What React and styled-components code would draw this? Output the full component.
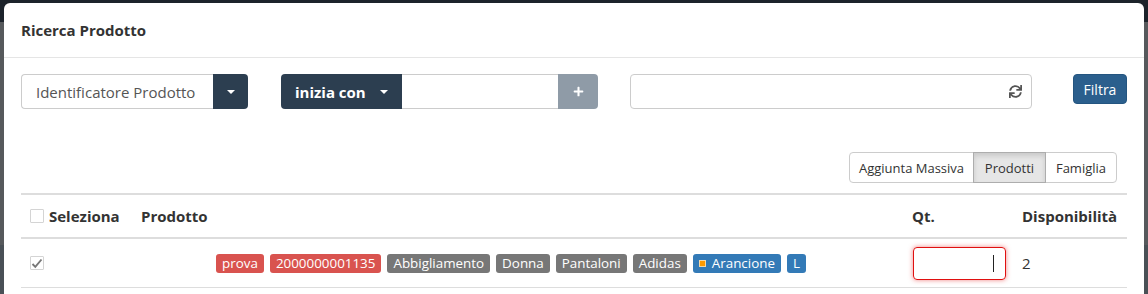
import React from "react";
import styled, { createGlobalStyle } from "styled-components";
import { FaSync, FaPlus } from "react-icons/fa";

const GlobalStyle = createGlobalStyle`
  html, body {
    margin: 0;
    padding: 0;
    background: #4f5458;
  }
  * {
    box-sizing: border-box;
  }
`;

const Screen = styled.div`
  width: 1148px;
  height: 294px;
  overflow: hidden;
  padding: 3px 4px 0 4px;
  background: linear-gradient(
    to bottom,
    #1c232b 0,
    #1c232b 22px,
    #56595c 22px,
    #56595c 245px,
    #495056 245px
  );
  font-family: "Open Sans", "Liberation Sans", sans-serif;
  color: #333;
`;

const Modal = styled.div`
  background: #fff;
  border-radius: 6px 6px 0 0;
  height: 291px;
`;

const Header = styled.div`
  height: 55px;
  padding: 0 17px;
  display: flex;
  align-items: center;
  border-bottom: 1px solid #e5e5e5;
`;

const Title = styled.h4`
  margin: 0;
  font-size: 15px;
  font-weight: 700;
  color: #333;
`;

const Body = styled.div`
  padding: 16px 17px 0 17px;
`;

const FilterRow = styled.div`
  display: flex;
  align-items: flex-start;
  height: 35px;
`;

const Group = styled.div`
  display: flex;
  height: 35px;
  margin-left: ${p => p.$offset || 0}px;
`;

const SelectBox = styled.div`
  width: ${p => p.$width}px;
  height: 35px;
  display: flex;
  align-items: center;
  padding-left: 14px;
  border: 1px solid #ccc;
  border-right: none;
  border-radius: 4px 0 0 4px;
  font-size: 15px;
  color: #555;
`;

const DarkButton = styled.div`
  width: ${p => p.$width}px;
  height: 35px;
  display: flex;
  align-items: center;
  justify-content: ${p => (p.$label ? "flex-start" : "center")};
  padding-left: ${p => (p.$label ? 14 : 0)}px;
  gap: 14px;
  background: #2c3e50;
  color: #fff;
  font-size: 15px;
  font-weight: 700;
  border-radius: ${p => p.$radius};
`;

const Caret = styled.span`
  width: 0;
  height: 0;
  border-left: 4px solid transparent;
  border-right: 4px solid transparent;
  border-top: 4px solid #fff;
`;

const TextInput = styled.div`
  width: ${p => p.$width}px;
  height: 35px;
  border: 1px solid #ccc;
  border-left: ${p => (p.$joined ? "none" : "1px solid #ccc")};
  border-right: ${p => (p.$joined ? "none" : "1px solid #ccc")};
  border-radius: ${p => (p.$joined ? "0" : "4px")};
  display: flex;
  align-items: center;
  justify-content: flex-end;
  padding-right: 9px;
  color: #555;
`;

const AddButton = styled.div`
  width: 40px;
  height: 35px;
  background: #8f9ba7;
  color: #fff;
  display: flex;
  align-items: center;
  justify-content: center;
  border-radius: 0 4px 4px 0;
`;

const FilterButton = styled.button`
  margin-left: auto;
  width: 54px;
  height: 30px;
  border: 1px solid #245580;
  border-radius: 4px;
  background: #2b5f8d;
  color: #fff;
  font-family: inherit;
  font-size: 14px;
  padding: 0;
`;

const ToggleRow = styled.div`
  display: flex;
  justify-content: flex-end;
  padding-right: 10px;
  margin-top: 43px;
`;

const ToggleButton = styled.div`
  height: 31px;
  width: ${p => p.$width}px;
  display: flex;
  align-items: center;
  justify-content: center;
  font-size: 13px;
  color: #333;
  border: 1px solid #ccc;
  margin-left: -1px;
  background: ${p => (p.$active ? "#e6e6e6" : "#fff")};
  border-color: ${p => (p.$active ? "#adadad" : "#ccc")};
  box-shadow: ${p => (p.$active ? "inset 0 3px 5px rgba(0,0,0,.125)" : "none")};
  position: relative;
  z-index: ${p => (p.$active ? 1 : 0)};

  &:first-child {
    border-radius: 4px 0 0 4px;
    margin-left: 0;
  }
  &:last-child {
    border-radius: 0 4px 4px 0;
  }
`;

const Table = styled.div`
  margin-top: 10px;
`;

const Row = styled.div`
  display: grid;
  grid-template-columns: 112px 1fr 110px 113px;
  align-items: center;
  height: ${p => (p.$head ? 46 : 49)}px;
  border-top: ${p => (p.$head ? "2px solid #ddd" : "none")};
  border-bottom: ${p => (p.$head ? "2px" : "1px")} solid #ddd;
`;

const HeadCell = styled.div`
  padding: 0 8px;
  font-size: 15px;
  font-weight: 700;
  color: #333;
  display: flex;
  align-items: center;
  gap: 5px;
  padding-left: ${p => p.$left || 8}px;
  white-space: nowrap;
`;

const Cell = styled.div`
  padding: 0 8px;
  padding-left: ${p => p.$left || 8}px;
  font-size: 15px;
  color: #333;
  display: flex;
  align-items: center;
  justify-content: ${p => (p.$center ? "center" : "flex-start")};
  padding-right: ${p => (p.$center ? 23 : 8)}px;
`;

const CheckBox = styled.span`
  width: 14px;
  height: 14px;
  border: 1px solid #d4d4d4;
  border-radius: 1px;
  display: inline-flex;
  align-items: center;
  justify-content: center;
  background: #fff;
`;

const Labels = styled.div`
  display: flex;
  gap: 6px;
`;

const colors = {
  danger: "#d9534f",
  default: "#777",
  primary: "#337ab7",
};

const Label = styled.span`
  height: 19px;
  line-height: 19px;
  padding: 0 6px;
  border-radius: 3px;
  background: ${p => colors[p.$kind]};
  color: #fff;
  font-size: 13.4px;
  display: inline-flex;
  align-items: center;
  gap: 6px;
`;

const Swatch = styled.span`
  width: 7px;
  height: 7px;
  background: #ff9a00;
  border: 1px solid #f5d9a8;
`;

const QtyInput = styled.div`
  width: 93px;
  height: 33px;
  margin-left: 1px;
  border: 1px solid #e01010;
  border-radius: 4px;
  box-shadow: 0 0 5px rgba(230, 30, 30, 0.55);
  display: flex;
  align-items: center;
  justify-content: flex-end;
  padding-right: 11px;
`;

const TextCaret = styled.span`
  width: 1px;
  height: 17px;
  background: #222;
`;

const tags = [
  { text: "prova", kind: "danger" },
  { text: "2000000001135", kind: "danger" },
  { text: "Abbigliamento", kind: "default" },
  { text: "Donna", kind: "default" },
  { text: "Pantaloni", kind: "default" },
  { text: "Adidas", kind: "default" },
  { text: "Arancione", kind: "primary", swatch: true },
  { text: "L", kind: "primary" },
];

const Check = () => (
  <svg width="12" height="11" viewBox="0 0 12 11">
    <path d="M1.5 6 L4.3 8.8 L10.5 1.5" fill="none" stroke="#777" strokeWidth="1.9" />
  </svg>
);

export default function App() {
  return (
    <>
      <GlobalStyle />
      <Screen>
        <Modal>
          <Header>
            <Title>Ricerca Prodotto</Title>
          </Header>
          <Body>
            <FilterRow>
              <Group>
                <SelectBox $width={192}>Identificatore Prodotto</SelectBox>
                <DarkButton $width={35} $radius="0 4px 4px 0">
                  <Caret />
                </DarkButton>
              </Group>
              <Group $offset={33}>
                <DarkButton $width={121} $label $radius="4px 0 0 4px">
                  inizia con
                  <Caret />
                </DarkButton>
                <TextInput $width={156} $joined />
                <AddButton>
                  <FaPlus size={11} />
                </AddButton>
              </Group>
              <Group $offset={32}>
                <TextInput $width={402}>
                  <FaSync size={13} color="#555" />
                </TextInput>
              </Group>
              <FilterButton>Filtra</FilterButton>
            </FilterRow>

            <ToggleRow>
              <ToggleButton $width={125}>Aggiunta Massiva</ToggleButton>
              <ToggleButton $width={73} $active>Prodotti</ToggleButton>
              <ToggleButton $width={72}>Famiglia</ToggleButton>
            </ToggleRow>

            <Table>
              <Row $head>
                <HeadCell $left={9}>
                  <CheckBox />
                  Seleziona
                </HeadCell>
                <HeadCell>Prodotto</HeadCell>
                <HeadCell>Qt.</HeadCell>
                <HeadCell>Disponibilità</HeadCell>
              </Row>
              <Row>
                <Cell $left={9}>
                  <CheckBox>
                    <Check />
                  </CheckBox>
                </Cell>
                <Cell $center>
                  <Labels>
                    {tags.map(t => (
                      <Label key={t.text} $kind={t.kind}>
                        {t.swatch && <Swatch />}
                        {t.text}
                      </Label>
                    ))}
                  </Labels>
                </Cell>
                <Cell>
                  <QtyInput>
                    <TextCaret />
                  </QtyInput>
                </Cell>
                <Cell>2</Cell>
              </Row>
            </Table>
          </Body>
        </Modal>
      </Screen>
    </>
  );
}
